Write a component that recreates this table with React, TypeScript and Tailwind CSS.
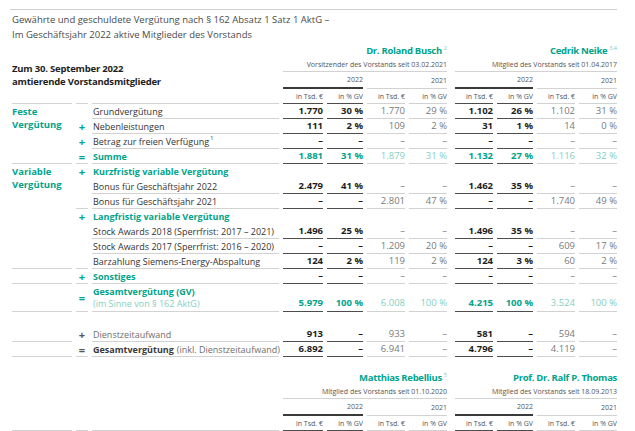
import React from 'react';

const GRID =
  'grid grid-cols-[60px_12px_187px_40px_36px_38px_38px_0px_38px_36px_38px_38px] gap-x-[4px] pl-[12px]';

const dash = ['–', '–', '–', '–', '–', '–', '–', '–'];

function Vals({ v, kind = 'normal', tall = false }: { v?: string[]; kind?: 'normal' | 'green' | 'none'; tall?: boolean }) {
  const h = tall ? 'h-[28px] items-end pb-[4px]' : 'h-[15px] items-center';
  const out: React.ReactNode[] = [];
  for (let i = 0; i < 8; i++) {
    if (i === 4) out.push(<div key="sp" />);
    const cur = i % 4 < 2;
    let cls = `flex justify-end ${h} text-[9.5px] leading-none `;
    if (kind === 'none') {
      out.push(<div key={i} className={cls} />);
      continue;
    }
    cls += cur ? 'border-b border-[#4d4d4d] font-bold ' : 'border-b border-[#d2d2d2] ';
    if (kind === 'green') cls += cur ? 'text-[#00a38b]' : 'text-[#86cfc1]';
    else cls += cur ? 'text-[#1e1e1e]' : 'text-[#7a7a7a]';
    out.push(
      <div key={i} className={cls}>
        {v?.[i]}
      </div>
    );
  }
  return <>{out}</>;
}

function Sign({ s, line = false, tall = false, dark = false }: { s?: string; line?: boolean; tall?: boolean; dark?: boolean }) {
  return (
    <div
      className={`col-start-2 flex items-center justify-center ${tall ? 'h-[28px]' : 'h-[15px]'} text-[11px] font-bold leading-none ${
        dark ? 'text-[#555]' : 'text-[#00a38b]'
      } ${line ? 'border-b border-[#d2d2d2]' : ''}`}
    >
      {s}
    </div>
  );
}

function Desc({ children, line = true, head = false }: { children: React.ReactNode; line?: boolean; head?: boolean }) {
  return (
    <div
      className={`flex h-[15px] items-center whitespace-nowrap pl-[1px] text-[9px] leading-none ${
        head ? 'font-bold text-[#00a38b]' : 'text-[#333]'
      } ${line ? 'border-b border-[#d2d2d2]' : ''}`}
    >
      {children}
    </div>
  );
}

function Label({ text, span, tall = false }: { text?: string[]; span: string; tall?: boolean }) {
  return (
    <div
      className={`col-start-1 ${span} ${tall ? 'h-[28px]' : 'min-h-[15px]'} border-b border-[#d2d2d2] pt-[2px] text-[9.5px] font-bold leading-[12.5px] text-[#00a38b]`}
    >
      {text?.map((t) => (
        <div key={t}>{t}</div>
      ))}
    </div>
  );
}

function BlockHeader({ names, left }: { names: { name: string; sup?: string; sub: string }[]; left?: React.ReactNode }) {
  return (
    <div className={GRID}>
      {/* names */}
      <div className="col-span-3 h-[14px]" />
      {names.map((n, i) => (
        <React.Fragment key={n.name}>
          {i === 1 && <div />}
          <div className="col-span-4 flex h-[14px] items-center justify-end text-[9.5px] font-bold leading-none tracking-[-0.3px] text-[#00a38b]">
            {n.name}
            {n.sup && <sup className="ml-[2px] text-[5.5px] font-normal tracking-normal text-[#7ccabb]">{n.sup}</sup>}
          </div>
        </React.Fragment>
      ))}
      {/* subtitle */}
      <div className="col-span-3 row-span-2 flex items-end pb-[1px] text-[9.5px] font-bold leading-[13px] tracking-[-0.2px] text-[#1e1e1e]">
        {left}
      </div>
      {names.map((n, i) => (
        <React.Fragment key={n.sub}>
          {i === 1 && <div />}
          <div className="col-span-4 flex h-[14px] items-center justify-end border-b border-[#d2d2d2] text-[7px] leading-none text-[#555]">
            {n.sub}
          </div>
        </React.Fragment>
      ))}
      {/* years */}
      {names.map((n, i) => (
        <React.Fragment key={n.name + 'y'}>
          {i === 1 && <div />}
          <div className={`${i === 0 ? 'col-start-4' : ''} col-span-2 flex h-[17px] items-center justify-end border-b-2 border-[#3a3a3a] pb-[1px] text-[7px] leading-none text-[#555]`}>
            2022
          </div>
          <div className="col-span-2 flex h-[17px] items-center justify-end border-b border-[#d2d2d2] text-[7px] leading-none text-[#555]">
            2021
          </div>
        </React.Fragment>
      ))}
      {/* units */}
      <div className="h-[15px] border-b border-[#d2d2d2]" />
      <div className="h-[15px] border-b border-[#d2d2d2]" />
      <div className="h-[15px] border-b border-[#d2d2d2]" />
      {names.map((n, i) => (
        <React.Fragment key={n.name + 'u'}>
          {i === 1 && <div />}
          {['in Tsd. €', 'in % GV', 'in Tsd. €', 'in % GV'].map((u, j) => (
            <div
              key={j}
              className={`flex h-[15px] items-center justify-end text-[7px] leading-none text-[#555] ${
                j < 2 ? 'border-b border-[#4d4d4d]' : 'border-b border-[#d2d2d2]'
              }`}
            >
              {u}
            </div>
          ))}
        </React.Fragment>
      ))}
    </div>
  );
}

export default function App() {
  return (
    <div className="h-[431px] w-[635px] overflow-hidden bg-white font-['Open_Sans',sans-serif]">
      <div className="ml-[10px] mt-[9px] h-px w-[607px] bg-[#cfcfcf]" />
      <div className="pl-[12px] pt-[2px] text-[9.5px] leading-[15px] text-[#4a4a4a]">
        <p>Gewährte und geschuldete Vergütung nach § 162 Absatz 1 Satz 1 AktG –</p>
        <p>Im Geschäftsjahr 2022 aktive Mitglieder des Vorstands</p>
      </div>

      <div className="mt-[2px]">
        <BlockHeader
          left={
            <div>
              <div>Zum 30. September 2022</div>
              <div>amtierende Vorstandsmitglieder</div>
            </div>
          }
          names={[
            { name: 'Dr. Roland Busch', sup: '2', sub: 'Vorsitzender des Vorstands seit 03.02.2021' },
            { name: 'Cedrik Neike', sup: '3,4', sub: 'Mitglied des Vorstands seit 01.04.2017' },
          ]}
        />

        <div className={GRID}>
          {/* Feste Vergütung */}
          <Label span="row-span-4" text={['Feste', 'Vergütung']} />
          <Sign />
          <Desc>Grundvergütung</Desc>
          <Vals v={['1.770', '30 %', '1.770', '29 %', '1.102', '26 %', '1.102', '31 %']} />
          <Sign s="+" />
          <Desc>Nebenleistungen</Desc>
          <Vals v={['111', '2 %', '109', '2 %', '31', '1 %', '14', '0 %']} />
          <Sign s="+" />
          <Desc>
            Betrag zur freien Verfügung<sup className="ml-[1px] text-[5.5px]">1</sup>
          </Desc>
          <Vals v={dash} />
          <Sign s="=" line />
          <Desc head>Summe</Desc>
          <Vals kind="green" v={['1.881', '31 %', '1.879', '31 %', '1.132', '27 %', '1.116', '32 %']} />

          {/* Variable Vergütung */}
          <Label span="row-span-7" text={['Variable', 'Vergütung']} />
          <Sign s="+" />
          <Desc head line={false}>Kurzfristig variable Vergütung</Desc>
          <Vals kind="none" />
          <Sign />
          <Desc>Bonus für Geschäftsjahr 2022</Desc>
          <Vals v={['2.479', '41 %', '–', '–', '1.462', '35 %', '–', '–']} />
          <Sign line />
          <Desc>Bonus für Geschäftsjahr 2021</Desc>
          <Vals v={['–', '–', '2.801', '47 %', '–', '–', '1.740', '49 %']} />
          <Sign s="+" />
          <Desc head line={false}>Langfristig variable Vergütung</Desc>
          <Vals kind="none" />
          <Sign />
          <Desc>Stock Awards 2018 (Sperrfrist: 2017 – 2021)</Desc>
          <Vals v={['1.496', '25 %', '–', '–', '1.496', '35 %', '–', '–']} />
          <Sign />
          <Desc>Stock Awards 2017 (Sperrfrist: 2016 – 2020)</Desc>
          <Vals v={['–', '–', '1.209', '20 %', '–', '–', '609', '17 %']} />
          <Sign line />
          <Desc>Barzahlung Siemens-Energy-Abspaltung</Desc>
          <Vals v={['124', '2 %', '119', '2 %', '124', '3 %', '60', '2 %']} />

          {/* Sonstiges */}
          <Label span="row-span-1" />
          <Sign s="+" line />
          <Desc head>Sonstiges</Desc>
          <Vals v={dash} />

          {/* Gesamtvergütung */}
          <Label span="row-span-1" tall />
          <Sign s="=" line tall />
          <div className="flex h-[28px] flex-col justify-center border-b border-[#d2d2d2] pl-[1px] text-[9px] leading-[12px] text-[#00a38b]">
            <span className="font-bold">Gesamtvergütung (GV)</span>
            <span className="text-[#86cfc1]">(im Sinne von § 162 AktG)</span>
          </div>
          <Vals kind="green" tall v={['5.979', '100 %', '6.008', '100 %', '4.215', '100 %', '3.524', '100 %']} />

          <div className="col-span-12 h-[15px]" />

          {/* Dienstzeitaufwand */}
          <Label span="row-span-1" />
          <Sign s="+" dark />
          <div className="flex h-[15px] items-center border-b border-[#d2d2d2] pl-[1px] text-[9px] leading-none text-[#6e6e6e]">
            Dienstzeitaufwand
          </div>
          <Vals v={['913', '–', '933', '–', '581', '–', '594', '–']} />
          <Label span="row-span-1" />
          <Sign s="=" line dark />
          <div className="flex h-[15px] items-center whitespace-nowrap border-b border-[#d2d2d2] pl-[1px] text-[9px] leading-none text-[#6e6e6e]">
            <span className="font-bold text-[#3a3a3a]">Gesamtvergütung</span>
            <span className="ml-[3px]">(inkl. Dienstzeitaufwand)</span>
          </div>
          <Vals v={['6.892', '–', '6.941', '–', '4.796', '–', '4.119', '–']} />
        </div>

        <div className="mt-[14px]">
          <BlockHeader
            names={[
              { name: 'Matthias Rebellius', sup: '5', sub: 'Mitglied des Vorstands seit 01.10.2020' },
              { name: 'Prof. Dr. Ralf P. Thomas', sub: 'Mitglied des Vorstands seit 18.09.2013' },
            ]}
          />
        </div>
      </div>
    </div>
  );
}
